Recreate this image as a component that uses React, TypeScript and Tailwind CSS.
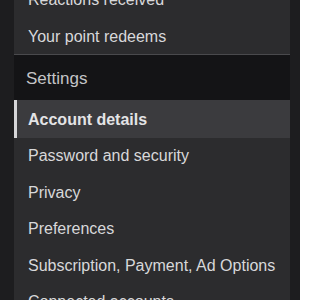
import React from "react";

const items = [
  "Password and security",
  "Privacy",
  "Preferences",
  "Subscription, Payment, Ad Options",
  "Connected accounts",
];

export default function App() {
  return (
    <div
      className="w-[300px] h-[300px] overflow-hidden bg-[#1d1d1f] flex"
      style={{ fontFamily: '"Liberation Sans", Arial, sans-serif' }}
    >
      <div className="ml-[14px] w-[276px] bg-[#2c2c2e] flex flex-col mt-[-18px]">
        <div className="h-[36.5px] leading-[36.5px] pl-[14px] text-[16px] text-[#d8d8da] whitespace-nowrap">
          Reactions received
        </div>
        <div className="h-[36.5px] leading-[36.5px] pl-[14px] text-[16px] text-[#d8d8da] whitespace-nowrap border-b border-[#4a4a4d]">
          Your point redeems
        </div>
        <div className="h-[45px] pt-[3px] leading-[42px] pl-[12px] text-[17px] text-[#c4c4c6] bg-[#141416]">
          Settings
        </div>
        <div className="h-[38px] pt-[1px] leading-[37px] pl-[11px] border-l-[3px] border-[#d6d6d8] bg-[#3b3b3e] text-[16px] font-bold text-[#e4e4e6] whitespace-nowrap">
          Account details
        </div>
        {items.map((t) => (
          <div
            key={t}
            className="h-[36.6px] leading-[36.6px] pl-[14px] text-[16px] text-[#d8d8da] whitespace-nowrap"
          >
            {t}
          </div>
        ))}
      </div>
    </div>
  );
}
